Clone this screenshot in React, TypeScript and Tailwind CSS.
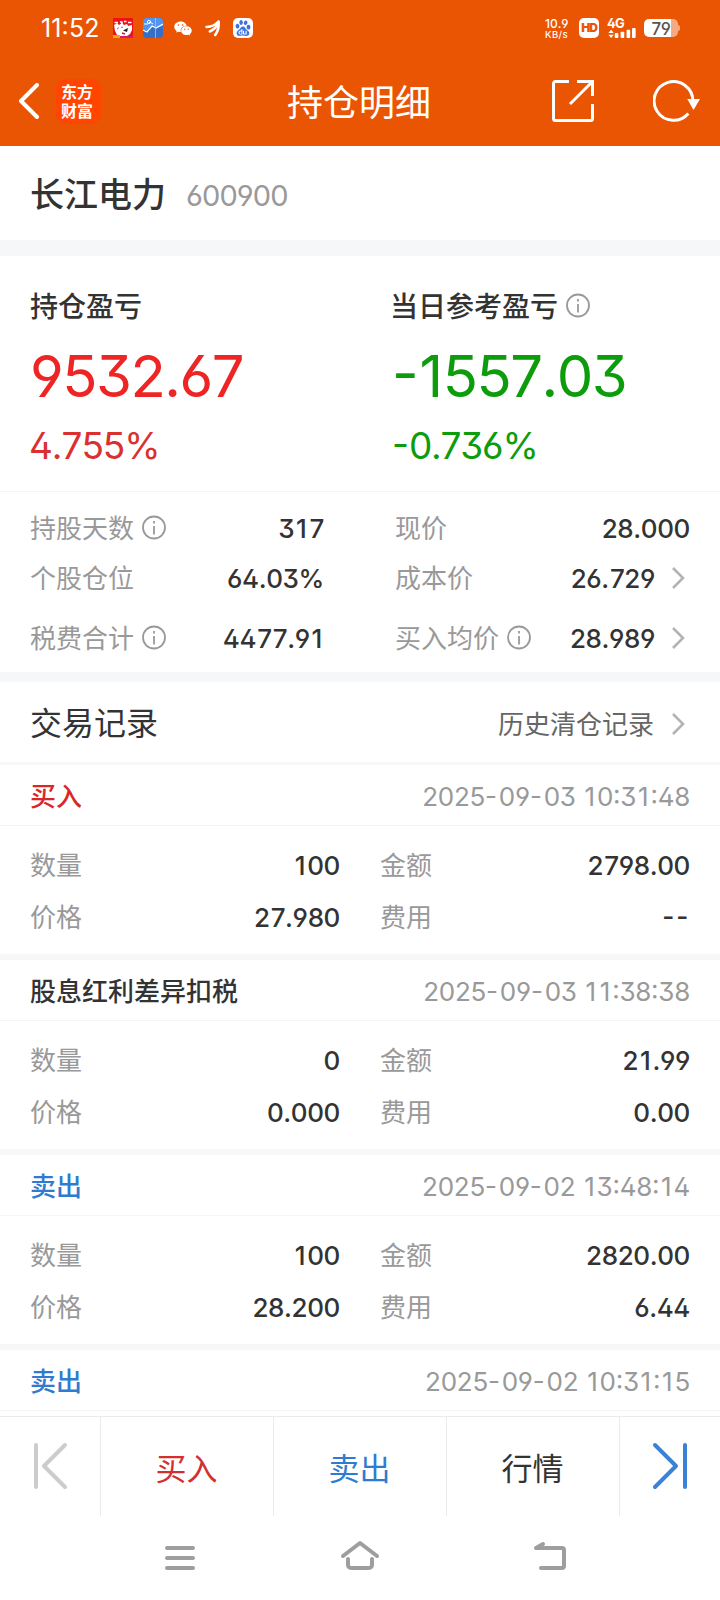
import clsx from "clsx";
import { type FC } from "react";
import { AiFillWechat } from "react-icons/ai";
import { SiBaidu } from "react-icons/si";

type TradeRecord = {
  title: string;
  tone: "buy" | "sell" | "other";
  time: string;
  amount?: string;
  total?: string;
  price?: string;
  fee?: string;
};

const records: TradeRecord[] = [
  {
    title: "买入",
    tone: "buy",
    time: "2025-09-03 10:31:48",
    amount: "100",
    total: "2798.00",
    price: "27.980",
    fee: "--",
  },
  {
    title: "股息红利差异扣税",
    tone: "other",
    time: "2025-09-03 11:38:38",
    amount: "0",
    total: "21.99",
    price: "0.000",
    fee: "0.00",
  },
  {
    title: "卖出",
    tone: "sell",
    time: "2025-09-02 13:48:14",
    amount: "100",
    total: "2820.00",
    price: "28.200",
    fee: "6.44",
  },
  { title: "卖出", tone: "sell", time: "2025-09-02 10:31:15" },
];

const App = () => {
  return (
    <div className="flex h-[1600px] w-[720px] flex-col overflow-hidden bg-white font-['Inter','Noto_Sans_CJK_SC',sans-serif] text-[26px] leading-none text-[#333] [font-feature-settings:'ss01','case'] [font-kerning:none]">
      <header className="h-[146px] shrink-0 bg-[#ea5504] text-white">
        <StatusBar />
        <TitleBar />
      </header>

      <main className="min-h-0 flex-1 overflow-hidden">
        <div className="flex h-[94px] items-center gap-[20px] px-[30px] pt-[4px]">
          <h1 className="text-[34px] font-medium">长江电力</h1>
          <span className="text-[29px] tracking-[-0.03em] text-[#999]">600900</span>
        </div>
        <Band className="h-4" />
        <Profit />
        <Stats />
        <Band className="h-[10px]" />

        <div className="flex h-20 items-center justify-between pl-[30px] pr-[35px] pt-[4px]">
          <h2 className="text-[32px]">交易记录</h2>
          <div className="flex items-center text-[#666]">
            <span className="mr-px pt-[2px]">历史清仓记录</span>
            <Chevron />
          </div>
        </div>
        <Band className="h-[3px]" />
        {records.map((item, index) => (
          <RecordCard key={index} item={item} />
        ))}
      </main>

      <BottomBar />
      <SystemNav />
    </div>
  );
};

export default App;

// "1" and "-" are narrow glyphs, give them some room among the other digits
const Num: FC<{ value?: string; className?: string }> = ({
  value = "",
  className,
}) => (
  <span className={clsx("whitespace-pre", className)}>
    {value.split(/([-17])/).map((part, index) => {
      if (part === "-") {
        return (
          <span key={index} className="tracking-[0.07em]">
            -
          </span>
        );
      }
      if (part === "1") {
        return (
          <span key={index} className="ml-[0.07em] mr-[0.08em]">
            1
          </span>
        );
      }
      if (part === "7") {
        return (
          <span key={index} className="ml-[0.04em]">
            7
          </span>
        );
      }
      return part;
    })}
  </span>
);

const Band: FC<{ className: string }> = ({ className }) => (
  <div className={clsx("w-full bg-[#f6f7f9]", className)} />
);

const StatusBar = () => (
  <div className="flex h-14 items-center pl-[41px] pr-[40px]">
    <span className="w-[72px] text-[25px] tracking-[0.005em]">11:52</span>

    {/* notification icons */}
    <svg className="h-5 w-5" viewBox="0 0 20 20">
      <rect width="20" height="20" rx="1" fill="#f01018" />
      <path d="M1 7l3-2 2 2 3-2 2 2 3-1 1 2 4-1v5l-2 4-3 2-5 1-5-2-2-4z" fill="#fff" />
      <path d="M1.500 4.500h3.500M7 4h2v2M11 3.500h2.500M15 4.500h3.500" stroke="#fff" strokeWidth="1.400" fill="none" />
      <path d="M4 11l2-1.500M8 9l2 .5" stroke="#d8505a" strokeWidth="1" />
      <path d="M10 12.500l5-2.500-1 4z" fill="#222" />
      <path d="M9 15l3 1" stroke="#f01018" strokeWidth="1.400" />
      <path d="M0 17h7v3H0z" fill="#f7a31c" />
      <path d="M7 18h13v2H7z" fill="#d21d69" />
    </svg>
    <svg className="ml-[10px] h-5 w-5" viewBox="0 0 20 20">
      <rect width="20" height="20" rx="4" fill="#356fca" />
      <path d="M0 11V4a4 4 0 014-4h12a4 4 0 014 4v4l-7 2-4-2-5 5z" fill="#5194f2" />
      <path d="M0 12l4 2 5-6 4 2 7-4" fill="none" stroke="#fff" strokeWidth="1.200" />
      <path d="M12.500 0v20" stroke="#a6c6f5" strokeWidth=".8" />
      <path d="M1 6l4 0 2-2 3 2" fill="none" stroke="#fff" strokeWidth="1" />
      <circle cx="6" cy="4" r="1.600" fill="none" stroke="#fff" />
    </svg>
    <AiFillWechat className="ml-[10px] h-[21px] w-[20px]" />
    {/* three feathers fanning out from the top right */}
    <svg className="ml-[12px] h-[17px] w-[15px]" viewBox="0 0 15 17" fill="none" stroke="#fff" strokeLinecap="round">
      <path d="M1.500 7C6 6.800 10.500 5 13.500 1.500" strokeWidth="2.600" />
      <path d="M4.800 11.500C9 9.500 12 6.500 13.700 2.500" strokeWidth="2.600" />
      <path d="M10.200 15C12.800 11.500 13.800 7.500 13.700 3" strokeWidth="2.600" />
    </svg>
    <span className="ml-[13px] flex h-5 w-5 items-center justify-center rounded-[5px] bg-white">
      <SiBaidu className="h-4 w-4 text-[#3f6fe0]" />
    </span>

    <div className="ml-auto flex items-center">
      <div className="flex w-[34px] flex-col font-medium">
        <span className="text-[12px] leading-[12px]">10.9</span>
        <span className="text-[9.500px] leading-[9px] tracking-[0.04em]">KB/s</span>
      </div>
      <span className="flex h-5 w-5 items-center justify-center rounded-[5px] bg-white text-[12px] font-black tracking-[-0.1em] text-[#ea5504]">
        HD
      </span>
      <div className="ml-[8px] flex h-5 w-[30px] flex-col justify-between">
        <span className="text-[13px] font-bold leading-[10px] tracking-[-0.06em]">4G</span>
        <svg className="h-[11px] w-[30px]" viewBox="0 0 30 11" fill="#fff">
          <path d="M0 5.500L3 2l3 3.500zM0 7.500h6L3 11z" />
          <rect x="7" y="5.500" width="4" height="5.500" rx="1" />
          <rect x="13.500" y="4" width="4" height="7" rx="1" />
          <rect x="20" y="2" width="4" height="9" rx="1" />
          <rect x="26" y="0" width="4" height="11" rx="1" />
        </svg>
      </div>
      <div className="ml-[7px] flex items-center">
        <div className="flex h-[18px] w-[34px] items-center justify-center overflow-hidden rounded-[5px] bg-[linear-gradient(to_right,#fff_80%,#f5aa82_80%)] pt-[2px] text-[17px] font-medium tracking-[-0.03em] text-[#555]">
          79
        </div>
        <span className="h-[6px] w-[2px] rounded-r-sm bg-[#f5aa82]" />
      </div>
    </div>
  </div>
);

const TitleBar = () => (
  <div className="grid h-[90px] grid-cols-[1fr_auto_1fr] items-center pl-[18px] pr-[20px]">
    <div className="flex items-center">
      <svg className="h-9 w-[21px]" viewBox="0 0 21 36" fill="none" stroke="#fff" strokeWidth="4" strokeLinecap="round" strokeLinejoin="round">
        <path d="M19 2L3 18l16 16" />
      </svg>
      <span className="ml-[17px] flex h-[45px] w-[45px] items-center justify-center rounded-[10px] bg-[#ff4500] pr-[2px]">
        <span className="w-[33px] break-all font-['Noto_Sans_CJK_SC',sans-serif] text-[16px] font-bold leading-[19px]">
          东方财富
        </span>
      </span>
    </div>
    <span className="pt-[4px] text-[36px]">持仓明细</span>
    <div className="flex items-center justify-end">
      <svg className="h-[42px] w-[42px]" viewBox="0 0 42 42" fill="none" stroke="#fff" strokeWidth="3">
        <path d="M17 1.500H3.500a2 2 0 00-2 2v35a2 2 0 002 2h35a2 2 0 002-2V24M25 1.500h15.500V16M40 2L18 24" />
      </svg>
      <svg className="ml-[59px] h-[42px] w-[47px]" viewBox="0 0 47 42" fill="none" stroke="#fff" strokeWidth="3">
        <path d="M35.300 33.500A19.400 19.400 0 1139.900 21" />
        <path d="M34.300 19H47l-6.500 11z" fill="#fff" stroke="none" />
      </svg>
    </div>
  </div>
);

const Profit = () => (
  <section className="grid h-[236px] grid-cols-[360px_1fr] border-b border-[#f3f4f6] pl-[30px] pt-[30px]">
    <div>
      <div className="flex h-10 items-center pt-[2px] text-[28px] font-medium">
        持仓盈亏
      </div>
      <span className="mt-[16px] flex h-[68px] items-center text-[58px] tracking-[-0.026em] text-[#ee2525]">
        9532.67
      </span>
      <span className="-ml-px mt-[13px] flex h-[44px] items-center text-[37px] tracking-[-0.028em] text-[#d93030]">
        4.755%
      </span>
    </div>
    <div className="text-[#0c9c0c]">
      <div className="flex h-10 items-center text-[28px] font-medium text-[#333]">
        <span className="pt-[2px]">当日参考盈亏</span>
        <InfoIcon />
      </div>
      <span className="ml-[2px] mt-[16px] flex h-[68px] items-center text-[58px] tracking-[-0.026em]">
        <span>-</span>
        <span className="ml-[0.04em] mr-[0.02em]">1</span>
        <span>557.03</span>
      </span>
      <span className="ml-[2px] mt-[13px] flex h-[44px] items-center text-[37px] tracking-[-0.032em]">
        <span>-</span>
        <span className="ml-[0.03em]">0.736%</span>
      </span>
    </div>
  </section>
);

const Stats = () => (
  <section className="h-[180px] pl-[30px] pt-[11px]">
    <div className="flex h-[50px]">
      <Stat label="持股天数" value="317" info />
      <Stat label="现价" value="28.000" right />
    </div>
    <div className="flex h-[50px]">
      <Stat label="个股仓位" value="64.03%" />
      <Stat label="成本价" value="26.729" right link />
    </div>
    <div className="mt-[10px] flex h-[50px]">
      <Stat label="税费合计" value="4477.91" info />
      <Stat label="买入均价" value="28.989" right info link />
    </div>
  </section>
);

const Stat: FC<{
  label: string;
  value: string;
  info?: boolean;
  right?: boolean;
  link?: boolean;
}> = ({ label, value, info, right, link }) => (
  <div
    className={clsx(
      "flex items-center justify-between",
      right ? "ml-[71px] w-[295px]" : "w-[294px]"
    )}
  >
    <span className="flex items-center text-[#999]">
      <span className="pt-px">{label}</span>
      {info && <InfoIcon />}
    </span>
    <span className={clsx("flex items-center", link && "pr-[5px]")}>
      <Num className="pt-[2px] font-medium tracking-[-0.015em]" value={value} />
      {link && <Chevron />}
    </span>
  </div>
);

const RecordCard: FC<{ item: TradeRecord }> = ({ item }) => (
  <article>
    <div className="flex h-[61px] items-center justify-between border-b border-[#f3f4f6] px-[30px] pt-[4px]">
      <span
        className={clsx(
          "font-medium",
          item.tone === "buy" && "text-[#dc2626]",
          item.tone === "sell" && "text-[#2f7bd0]"
        )}
      >
        {item.title}
      </span>
      <Num className="tracking-[-0.01em] text-[#999]" value={item.time} />
    </div>
    {item.amount && (
      <>
        <div className="grid h-[128px] grid-cols-[310px_310px] grid-rows-[52px_52px] gap-x-[40px] px-[30px] pt-[14px]">
          <Cell label="数量" value={item.amount} />
          <Cell label="金额" value={item.total} />
          <Cell label="价格" value={item.price} />
          <Cell label="费用" value={item.fee} />
        </div>
        <Band className="h-[6px]" />
      </>
    )}
  </article>
);

const Cell: FC<{ label: string; value?: string }> = ({ label, value }) => (
  <div className="flex items-center justify-between">
    <span className="text-[#999]">{label}</span>
    <Num className="font-medium tracking-[-0.015em]" value={value} />
  </div>
);

const BottomBar = () => (
  <footer className="grid h-[100px] shrink-0 grid-cols-[101px_173px_173px_173px_100px] divide-x divide-[#ebebeb] border-t border-[#ebebeb] text-[31px]">
    <div className="pl-[33px] pt-[25px]">
      <svg className="h-[48px] w-[36px]" viewBox="0 0 36 48" fill="none" stroke="#ccc" strokeWidth="4" strokeLinecap="round" strokeLinejoin="round">
        <path d="M3 3v42M32 3L11 24l21 21" />
      </svg>
    </div>
    <div className="flex items-center justify-center pr-px pt-[3px] text-[#d32f2f]">买入</div>
    <div className="flex items-center justify-center pr-px pt-[3px] text-[#2f7bd0]">卖出</div>
    <div className="flex items-center justify-center pr-px pt-[3px]">行情</div>
    <div className="pl-[32px] pt-[25px]">
      <svg className="h-[48px] w-[36px]" viewBox="0 0 36 48" fill="none" stroke="#3a82d6" strokeWidth="4" strokeLinecap="round" strokeLinejoin="round">
        <path d="M33 3v42M3 3l21 21L3 45" />
      </svg>
    </div>
  </footer>
);

const SystemNav = () => (
  <nav className="flex h-[84px] shrink-0 items-start pl-[164px] pt-[23px]">
    <svg className="h-9 w-8" viewBox="0 0 32 36" stroke="#9e9e9e" strokeWidth="4" strokeLinecap="round">
      <path d="M3 9h26M3 19h26M3 29h26" />
    </svg>
    <svg className="ml-[144px] h-9 w-10" viewBox="0 0 40 36" fill="none" stroke="#9e9e9e" strokeWidth="4" strokeLinecap="round" strokeLinejoin="round">
      <path d="M3 17L20 4l17 13M8 20v6a3 3 0 003 3h18a3 3 0 003-3v-6" />
    </svg>
    <svg className="ml-[152px] h-9 w-9" viewBox="0 0 36 36" fill="none" stroke="#9e9e9e" strokeWidth="4" strokeLinecap="round" strokeLinejoin="round">
      <path d="M11 5L4 9h26a2 2 0 012 2v16a2 2 0 01-2 2H9" />
    </svg>
  </nav>
);

const InfoIcon = () => (
  <svg className="ml-[7px] h-[26px] w-[26px]" viewBox="0 0 26 26" fill="none" stroke="#999" strokeWidth="1.800">
    <circle cx="13" cy="12.500" r="11" />
    <path d="M13 11v8.500M13 6v2.500" />
  </svg>
);

const Chevron = () => (
  <svg className="ml-[17px] h-[22px] w-[13px]" viewBox="0 0 13 22" fill="none" stroke="#b3b3b3" strokeWidth="2.600">
    <path d="M1 1l10 10L1 21" />
  </svg>
);
